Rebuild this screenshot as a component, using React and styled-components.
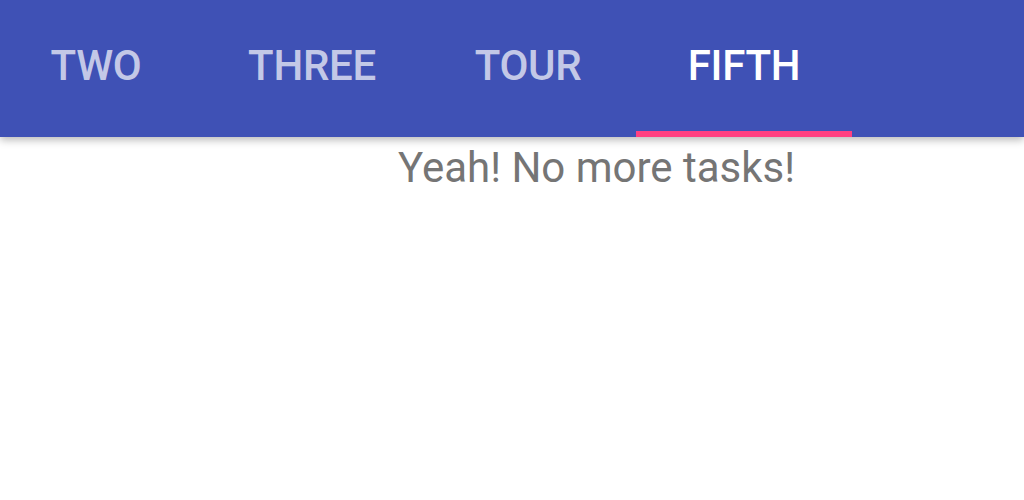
import styled, { createGlobalStyle } from "styled-components";

const GlobalStyle = createGlobalStyle`
  body {
    margin: 0;
    background: #ffffff;
    font-family: Roboto, "Liberation Sans", sans-serif;
  }
`;

const Page = styled.div`
  width: 1024px;
  height: 500px;
  overflow: hidden;
  background: #ffffff;
`;

const TabBar = styled.nav`
  position: relative;
  z-index: 1;
  height: 137px;
  background: #3f51b5;
  box-shadow: 0 3px 8px rgba(0, 0, 0, 0.28);
  overflow: hidden;
`;

const TabStrip = styled.div`
  display: flex;
  margin-left: -12px;
  height: 100%;
`;

const Tab = styled.div`
  box-sizing: border-box;
  flex: 0 0 216px;
  height: 100%;
  padding-top: 45px;
  text-align: center;
  font-size: 42px;
  line-height: 42px;
  font-weight: 500;
  letter-spacing: -0.3px;
  color: ${({ $active }) => ($active ? "#ffffff" : "rgba(255, 255, 255, 0.7)")};
  border-bottom: 6px solid ${({ $active }) => ($active ? "#ff4081" : "transparent")};
`;

const Empty = styled.p`
  margin: 10px 0 0 0;
  padding-left: 398px;
  font-size: 42px;
  line-height: 42px;
  color: #757575;
`;

const tabs = ["TWO", "THREE", "TOUR", "FIFTH"];

export default function App() {
  return (
    <Page>
      <GlobalStyle />
      <TabBar>
        <TabStrip>
          {tabs.map((t) => (
            <Tab key={t} $active={t === "FIFTH"}>
              {t}
            </Tab>
          ))}
        </TabStrip>
      </TabBar>
      <Empty>Yeah! No more tasks!</Empty>
    </Page>
  );
}
